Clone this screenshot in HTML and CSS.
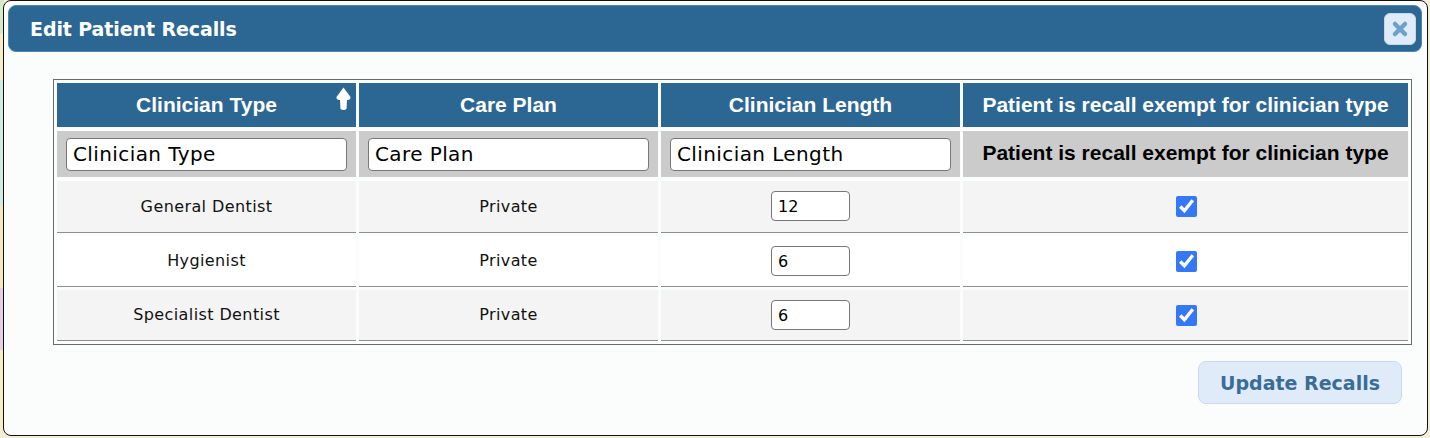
FILE: index.html
```html
<!DOCTYPE html>
<html lang="en">
<head>
  <meta charset="UTF-8">
  <title>Edit Patient Recalls</title>
  <link rel="stylesheet" href="styles.css">
</head>
<body>
  <div class="dialog">
    <div class="titlebar">
      <span class="title">Edit Patient Recalls</span>
      <button class="close" type="button" aria-label="Close">
        <svg width="18" height="18" viewBox="0 0 18 18">
          <path d="M4 4 L14 14 M14 4 L4 14" stroke="#6f9fcb" stroke-width="4.5" stroke-linecap="round"/>
        </svg>
      </button>
    </div>
    <div class="content">
      <div class="table-box">
        <table class="recalls">
          <colgroup>
            <col class="col-narrow">
            <col class="col-narrow">
            <col class="col-narrow">
            <col>
          </colgroup>
          <thead>
            <tr class="head-row">
              <th>Clinician Type
                <svg class="sort-icon" width="17" height="24" viewBox="0 0 17 24">
                  <path d="M8.5 0.5 L15.5 10 Q16 13 12 13 L11.5 22 Q8.5 24 5.5 22 L5 13 Q1 13 1.5 10 Z" fill="#fff"/>
                </svg>
              </th>
              <th>Care Plan</th>
              <th>Clinician Length</th>
              <th>Patient is recall exempt for clinician type</th>
            </tr>
            <tr class="filter-row">
              <th><input class="filter" type="text" value="Clinician Type"></th>
              <th><input class="filter" type="text" value="Care Plan"></th>
              <th><input class="filter" type="text" value="Clinician Length"></th>
              <th>Patient is recall exempt for clinician type</th>
            </tr>
          </thead>
          <tbody>
            <tr class="odd first">
              <td>General Dentist</td>
              <td>Private</td>
              <td><input class="length" type="text" value="12"></td>
              <td class="check-cell"><input class="check" type="checkbox" checked></td>
            </tr>
            <tr>
              <td class="text-cell">Hygienist</td>
              <td class="text-cell">Private</td>
              <td><input class="length" type="text" value="6"></td>
              <td class="check-cell"><input class="check" type="checkbox" checked></td>
            </tr>
            <tr class="odd">
              <td class="text-cell">Specialist Dentist</td>
              <td class="text-cell">Private</td>
              <td><input class="length" type="text" value="6"></td>
              <td class="check-cell"><input class="check" type="checkbox" checked></td>
            </tr>
          </tbody>
        </table>
      </div>
      <div class="actions">
        <button class="update" type="button">Update Recalls</button>
      </div>
    </div>
  </div>
</body>
</html>
```

FILE: styles.css
```css
html, body {
  height: 100%;
}
body {
  margin: 0;
  /* page behind the dialog, only a sliver shows on the left */
  background-color: #f4eed6;
  background-image: linear-gradient(to bottom,
    #d6e9c9 0, #d6e9c9 34px,
    #f6edc8 34px, #f6edc8 80px,
    #d2eae2 80px, #d2eae2 205px,
    #f3e8c0 205px, #f3e8c0 288px,
    #e4d0e2 288px, #e4d0e2 350px,
    #f6edc4 350px, #f6edc4 430px,
    #f4eed6 430px);
  background-size: 4px 100%;
  background-repeat: no-repeat;
  font-family: "DejaVu Sans", sans-serif;
  overflow: hidden;
}
.dialog {
  box-sizing: border-box;
  width: 1425px;
  height: 436px;
  margin-left: 3px;
  padding: 4px;
  background-color: #fbfdfc;
  border: 1px solid #111;
  border-radius: 8px;
}
.titlebar {
  box-sizing: border-box;
  height: 47px;
  margin-right: 1px;
  padding: 0 5px 0 21px;
  display: flex;
  justify-content: space-between;
  align-items: center;
  background-color: #2c6794;
  border: 1px solid #4f86b4;
  border-radius: 8px;
  color: #fff;
}
.title {
  font-size: 19px;
  font-weight: bold;
  letter-spacing: -0.1px;
}
.close {
  width: 32px;
  height: 32px;
  padding: 0;
  display: flex;
  justify-content: center;
  align-items: center;
  background-color: #dfebf9;
  border: 1px solid #c5d8ea;
  border-radius: 6px;
}
.content {
  padding: 27px 11px 0 45px;
}
.table-box {
  border: 1px solid #6b6b6b;
}
.recalls {
  width: 100%;
  table-layout: fixed;
  border-collapse: separate;
  border-spacing: 3px;
}
.col-narrow {
  width: 299px;
}
.recalls th {
  font-family: "Liberation Sans", sans-serif;
  font-size: 21px;
  font-weight: bold;
  text-align: center;
  padding: 0 9px;
}
.head-row th {
  position: relative;
  height: 44px;
  background-color: #2c6794;
  color: #fff;
}
.head-row th:last-child {
  padding: 0;
}
.filter-row th:last-child {
  padding: 0 0 2px;
}
.sort-icon {
  position: absolute;
  top: 4px;
  right: 4px;
}
.filter-row th {
  height: 44px;
  background-color: #cbcbcb;
  background-clip: padding-box;
  color: #000;
  border-top: 1px solid #fff;
}
.filter {
  box-sizing: border-box;
  display: block;
  width: 100%;
  height: 33px;
  padding: 0 6px;
  font-family: "DejaVu Sans", sans-serif;
  font-size: 20px;
  letter-spacing: 0.4px;
  color: #000;
  background-color: #fff;
  border: 1px solid #777;
  border-radius: 4px;
}
.recalls td {
  height: 50px;
  padding: 0;
  text-align: center;
  font-size: 16px;
  letter-spacing: 0.4px;
  color: #111;
  background-color: #fff;
  border-bottom: 1px solid #8f8f8f;
}
.recalls .odd td {
  background-color: #f4f4f4;
}
.recalls .first td {
  padding-bottom: 1px;
  background-clip: padding-box;
  border-top: 1px solid #fff;
}
.recalls .text-cell {
  height: 48px;
  padding-bottom: 2px;
}
.recalls .check-cell {
  padding-left: 1px;
}
.length {
  box-sizing: border-box;
  display: inline-block;
  vertical-align: middle;
  width: 79px;
  height: 30px;
  padding: 0 6px;
  font-family: "DejaVu Sans", sans-serif;
  font-size: 16px;
  color: #000;
  background-color: #fff;
  border: 1px solid #777;
  border-radius: 4px;
}
.check {
  width: 21px;
  height: 21px;
  margin: 0;
  vertical-align: middle;
  accent-color: #3478f6;
}
.actions {
  display: flex;
  justify-content: flex-end;
  margin-top: 16px;
  margin-right: 10px;
}
.update {
  box-sizing: border-box;
  width: 204px;
  height: 43px;
  font-family: "DejaVu Sans", sans-serif;
  font-size: 19px;
  font-weight: bold;
  color: #3a6c98;
  background-color: #e0ebf9;
  border: 1px solid #c8d9ec;
  border-radius: 8px;
}
```
